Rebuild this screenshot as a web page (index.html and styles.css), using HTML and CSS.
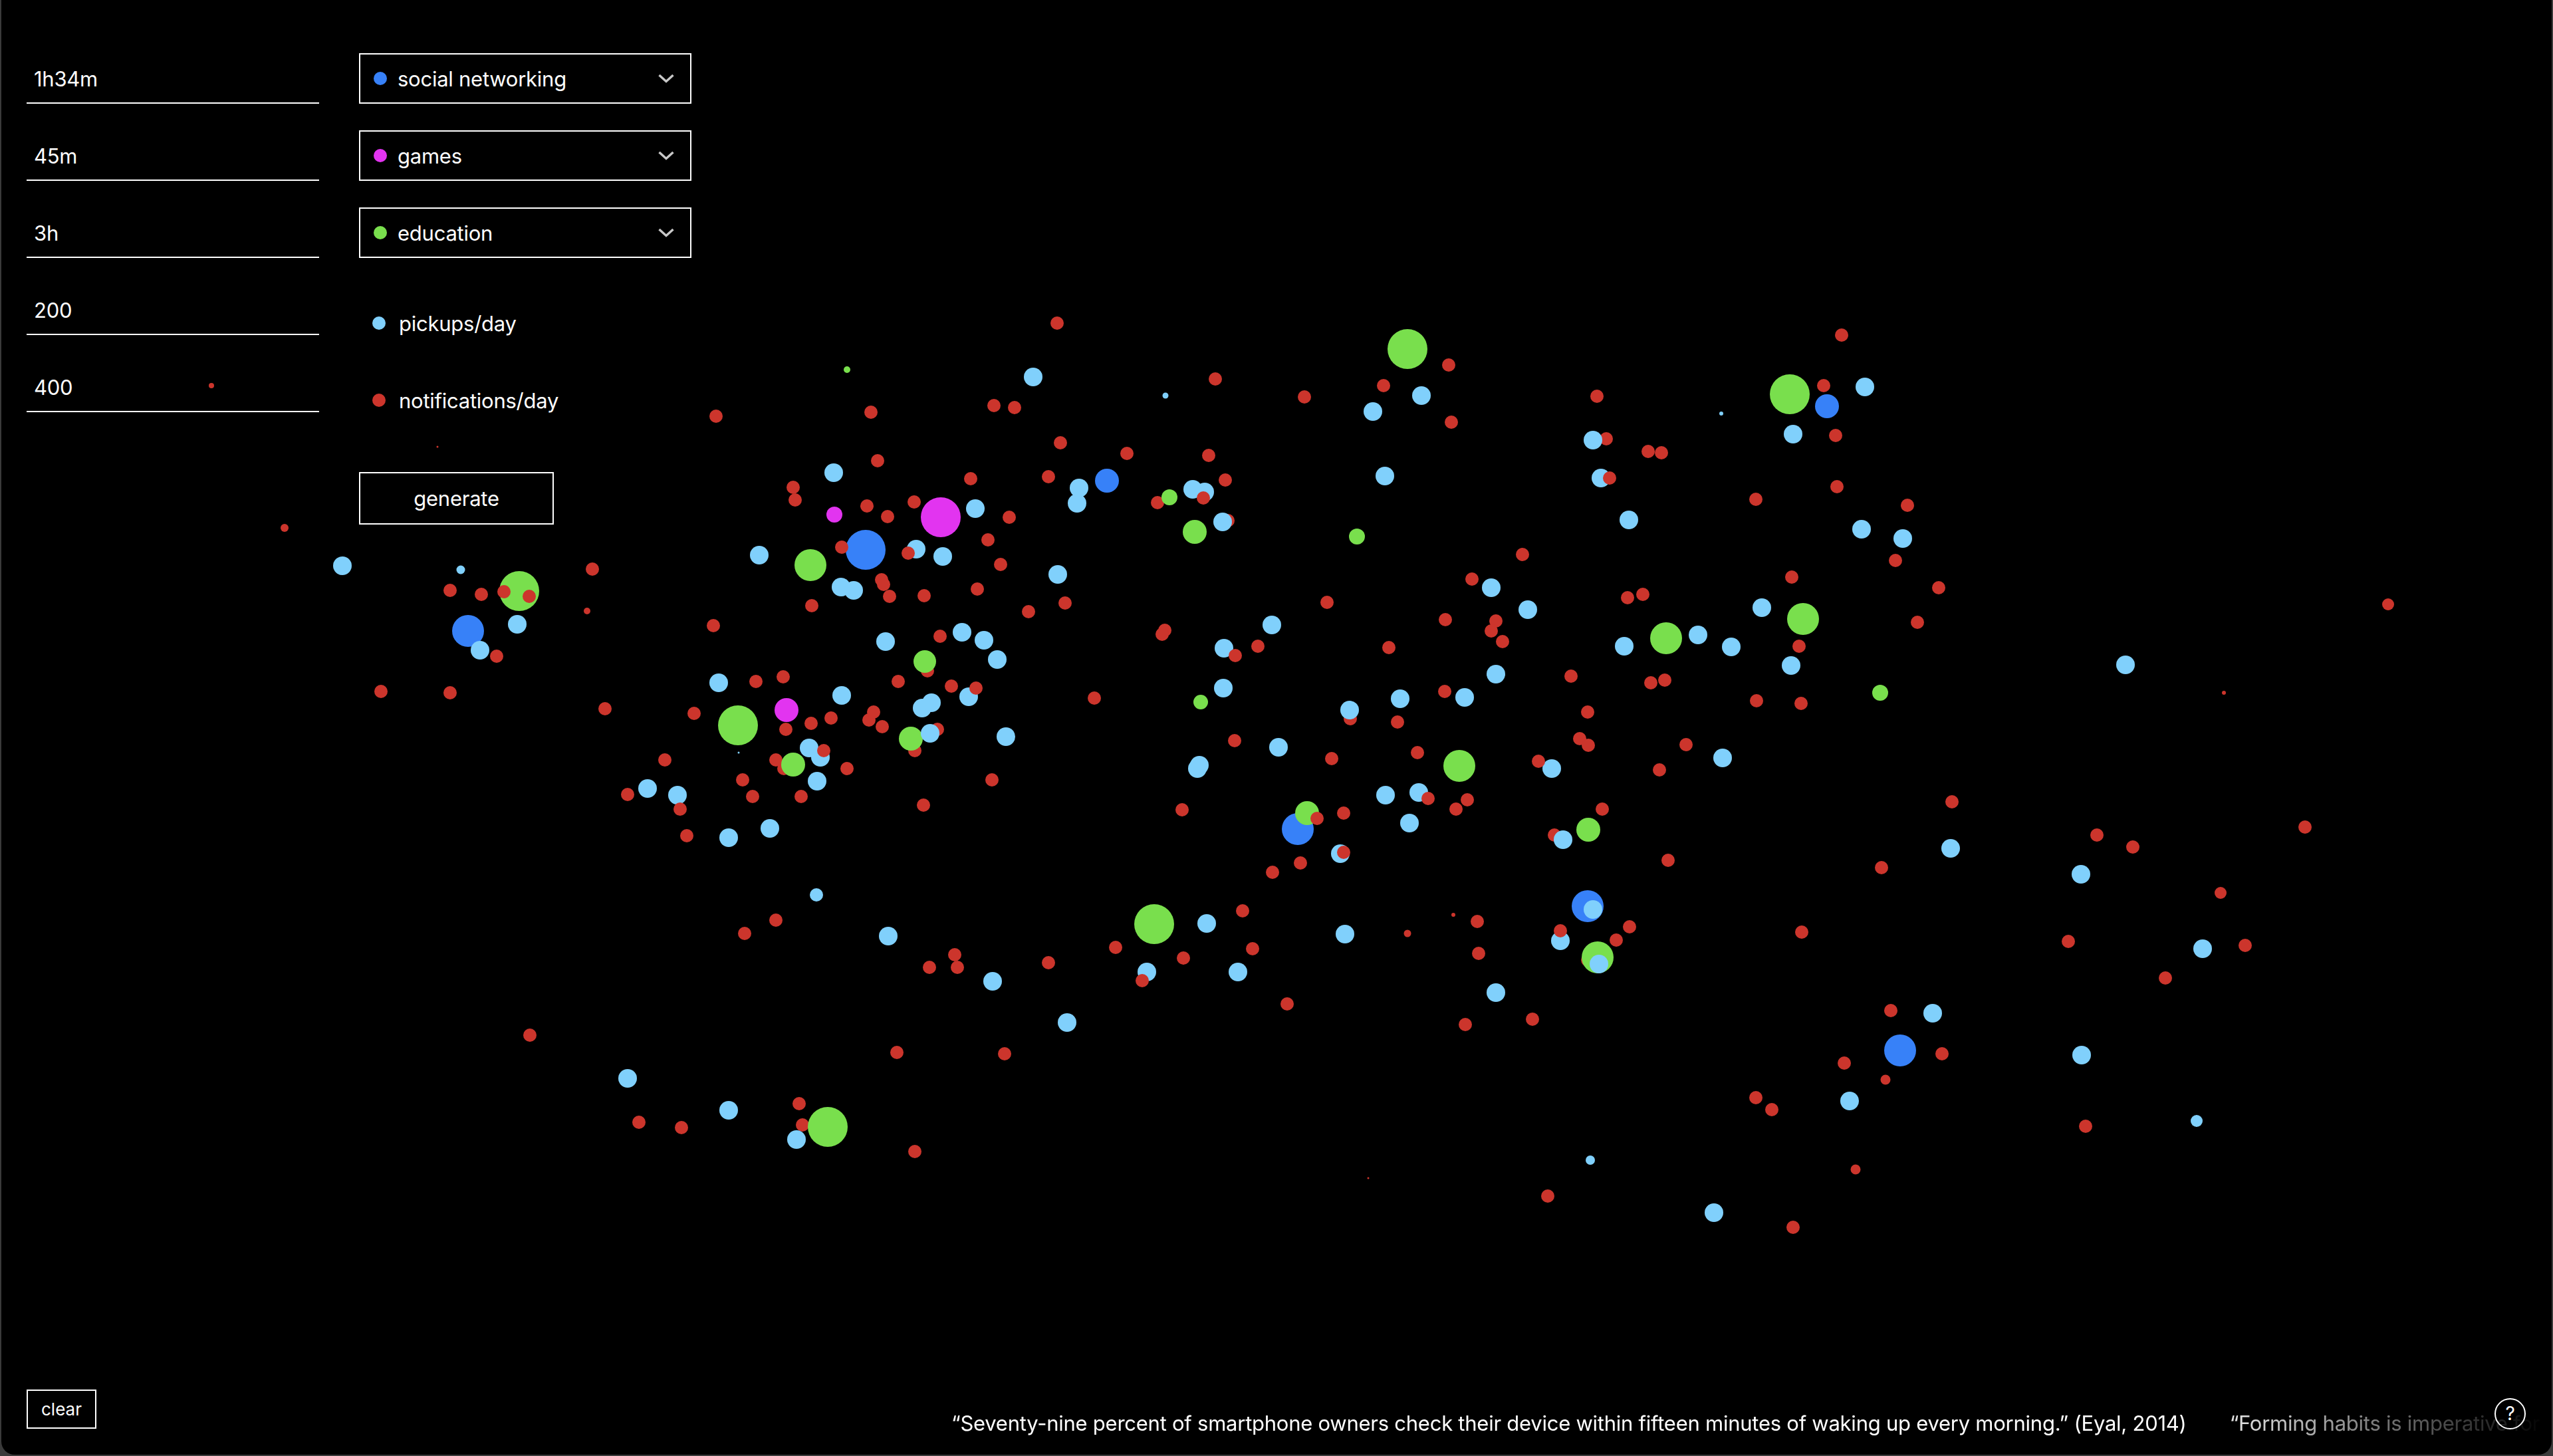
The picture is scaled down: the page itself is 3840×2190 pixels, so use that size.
FILE: index.html
```html
<!DOCTYPE html>
<html lang="en">
<head>
    <meta charset="UTF-8">
    <title>Phone usage</title>
    <link rel="stylesheet" href="styles.css">
</head>
<body>
    <div class="window">
        <svg class="canvas" viewBox="0 0 3840 2190" width="3840" height="2190">
            <g class="blue">
                <circle cx="704" cy="949" r="24"/><circle cx="1302" cy="827" r="30"/><circle cx="1665" cy="723" r="18"/>
                <circle cx="2748" cy="611" r="18"/><circle cx="1952" cy="1247" r="24"/><circle cx="2388" cy="1363" r="24"/>
                <circle cx="2858" cy="1580" r="24"/>
            </g>
            <g class="magenta">
                <circle cx="1255" cy="774" r="12"/><circle cx="1183" cy="1068" r="18"/><circle cx="1415" cy="778" r="30"/>
            </g>
            <!-- reds that sit under the green and pickup dots -->
            <g class="red">
                <circle cx="1395" cy="1009" r="10"/><circle cx="1376" cy="1129" r="10"/><circle cx="1179" cy="1156" r="10"/>
                <circle cx="1167" cy="1143" r="10"/><circle cx="2388" cy="1444" r="10"/><circle cx="1207" cy="1692" r="10"/>
                <circle cx="1741" cy="756" r="10"/><circle cx="1410" cy="1097" r="10"/><circle cx="2031" cy="1081" r="10"/>
                <circle cx="1847" cy="783" r="10"/><circle cx="2338" cy="1256" r="10"/><circle cx="2416" cy="660" r="10"/>
            </g>
            <g class="green">
                <circle cx="781" cy="889" r="30"/><circle cx="1219" cy="850" r="24"/><circle cx="1110" cy="1091" r="30"/>
                <circle cx="1193" cy="1150" r="18"/><circle cx="1274" cy="556" r="5"/><circle cx="2117" cy="525" r="30"/>
                <circle cx="1797" cy="800" r="18"/><circle cx="1759" cy="748" r="12"/><circle cx="2041" cy="807" r="12"/>
                <circle cx="1391" cy="995" r="17"/><circle cx="1370" cy="1111" r="18"/><circle cx="1806" cy="1056" r="11"/>
                <circle cx="2195" cy="1152" r="24"/><circle cx="1966" cy="1223" r="18"/><circle cx="2692" cy="593" r="30"/>
                <circle cx="2506" cy="960" r="24"/><circle cx="2712" cy="931" r="24"/><circle cx="2828" cy="1042" r="12"/>
                <circle cx="2389" cy="1248" r="18"/><circle cx="2403" cy="1440" r="24"/><circle cx="1736" cy="1390" r="30"/>
                <circle cx="1245" cy="1695" r="30"/>
            </g>
            <g class="pickup">
                <circle cx="515" cy="851" r="14"/><circle cx="693" cy="857" r="6.5"/><circle cx="778" cy="939" r="14"/>
                <circle cx="722" cy="978" r="14"/><circle cx="1254" cy="711" r="14"/><circle cx="1142" cy="835" r="14"/>
                <circle cx="1265" cy="883" r="14"/><circle cx="1284" cy="888" r="14"/><circle cx="1081" cy="1027" r="14"/>
                <circle cx="1266" cy="1046" r="14"/><circle cx="1217" cy="1125" r="14"/><circle cx="1234" cy="1139" r="14"/>
                <circle cx="1229" cy="1175" r="14"/><circle cx="974" cy="1186" r="14"/><circle cx="1019" cy="1196" r="14"/>
                <circle cx="1158" cy="1246" r="14"/><circle cx="1096" cy="1260" r="14"/><circle cx="1111" cy="1132" r="1.5"/>
                <circle cx="1554" cy="567" r="14"/><circle cx="1753" cy="595" r="4.5"/><circle cx="2138" cy="595" r="14"/>
                <circle cx="2065" cy="619" r="14"/><circle cx="1623" cy="734" r="14"/><circle cx="1620" cy="757" r="14"/>
                <circle cx="1812" cy="740" r="14"/><circle cx="1794" cy="736" r="14"/><circle cx="2083" cy="716" r="14"/>
                <circle cx="1467" cy="765" r="14"/><circle cx="1839" cy="785" r="14"/><circle cx="1378" cy="826" r="14"/>
                <circle cx="1418" cy="837" r="14"/><circle cx="1591" cy="864" r="14"/><circle cx="2243" cy="884" r="14"/>
                <circle cx="2298" cy="917" r="14"/><circle cx="1913" cy="940" r="14"/><circle cx="1447" cy="951" r="14"/>
                <circle cx="1480" cy="963" r="14"/><circle cx="1332" cy="965" r="14"/><circle cx="1500" cy="992" r="14"/>
                <circle cx="1841" cy="975" r="14"/><circle cx="1840" cy="1035" r="14"/><circle cx="2250" cy="1014" r="14"/>
                <circle cx="2106" cy="1051" r="14"/><circle cx="2203" cy="1049" r="14"/><circle cx="2030" cy="1068" r="14"/>
                <circle cx="1457" cy="1048" r="14"/><circle cx="1387" cy="1065" r="14"/><circle cx="1401" cy="1057" r="14"/>
                <circle cx="1399" cy="1103" r="14"/><circle cx="1513" cy="1108" r="14"/><circle cx="1923" cy="1124" r="14"/>
                <circle cx="1804" cy="1151" r="14"/><circle cx="1801" cy="1156" r="14"/><circle cx="2084" cy="1196" r="14"/>
                <circle cx="2134" cy="1192" r="14"/><circle cx="2120" cy="1238" r="14"/><circle cx="2805" cy="582" r="14"/>
                <circle cx="2589" cy="622" r="3"/><circle cx="2697" cy="653" r="14"/><circle cx="2396" cy="662" r="14"/>
                <circle cx="2408" cy="719" r="14"/><circle cx="2450" cy="782" r="14"/><circle cx="2800" cy="796" r="14"/>
                <circle cx="2862" cy="810" r="14"/><circle cx="2650" cy="914" r="14"/><circle cx="2554" cy="955" r="14"/>
                <circle cx="2443" cy="972" r="14"/><circle cx="2604" cy="973" r="14"/><circle cx="2694" cy="1001" r="14"/>
                <circle cx="3197" cy="1000" r="14"/><circle cx="2591" cy="1140" r="14"/><circle cx="2334" cy="1156" r="14"/>
                <circle cx="2351" cy="1263" r="14"/><circle cx="2016" cy="1284" r="14"/><circle cx="1815" cy="1389" r="14"/>
                <circle cx="2023" cy="1405" r="14"/><circle cx="2347" cy="1415" r="14"/><circle cx="1862" cy="1462" r="14"/>
                <circle cx="2250" cy="1493" r="14"/><circle cx="2405" cy="1450" r="14"/><circle cx="2396" cy="1368" r="14"/>
                <circle cx="2782" cy="1656" r="14"/><circle cx="2392" cy="1745" r="7"/><circle cx="2578" cy="1824" r="14"/>
                <circle cx="2907" cy="1524" r="14"/><circle cx="2934" cy="1276" r="14"/><circle cx="3130" cy="1315" r="14"/>
                <circle cx="3313" cy="1427" r="14"/><circle cx="3131" cy="1587" r="14"/><circle cx="3304" cy="1686" r="9"/>
                <circle cx="1228" cy="1346" r="10"/><circle cx="1336" cy="1408" r="14"/><circle cx="1493" cy="1476" r="14"/>
                <circle cx="1605" cy="1538" r="14"/><circle cx="1725" cy="1462" r="14"/><circle cx="944" cy="1622" r="14"/>
                <circle cx="1096" cy="1670" r="14"/><circle cx="1198" cy="1714" r="14"/>
            </g>
            <g class="red">
                <circle cx="318" cy="580" r="4"/><circle cx="658" cy="672" r="1.5"/><circle cx="1077" cy="626" r="10"/>
                <circle cx="428" cy="794" r="6"/><circle cx="891" cy="856" r="10"/><circle cx="677" cy="888" r="10"/>
                <circle cx="724" cy="894" r="10"/><circle cx="758" cy="890" r="10"/><circle cx="796" cy="897" r="10"/>
                <circle cx="883" cy="919" r="5"/><circle cx="747" cy="987" r="10"/><circle cx="573" cy="1040" r="10"/>
                <circle cx="677" cy="1042" r="10"/><circle cx="910" cy="1066" r="10"/><circle cx="1073" cy="941" r="10"/>
                <circle cx="1193" cy="733" r="10"/><circle cx="1196" cy="752" r="10"/><circle cx="1266" cy="823" r="10"/>
                <circle cx="1221" cy="911" r="10"/><circle cx="1137" cy="1025" r="10"/><circle cx="1178" cy="1018" r="10"/>
                <circle cx="1044" cy="1073" r="10"/><circle cx="1220" cy="1088" r="10"/><circle cx="1182" cy="1097" r="10"/>
                <circle cx="1250" cy="1080" r="10"/><circle cx="1239" cy="1129" r="10"/><circle cx="1274" cy="1156" r="10"/>
                <circle cx="1000" cy="1143" r="10"/><circle cx="1117" cy="1173" r="10"/><circle cx="1132" cy="1198" r="10"/>
                <circle cx="1205" cy="1198" r="10"/><circle cx="944" cy="1195" r="10"/><circle cx="1023" cy="1217" r="10"/>
                <circle cx="1033" cy="1257" r="10"/><circle cx="1304" cy="761" r="10"/><circle cx="1307" cy="1083" r="10"/>
                <circle cx="1314" cy="1071" r="10"/><circle cx="1590" cy="486" r="10"/><circle cx="1828" cy="570" r="10"/>
                <circle cx="1495" cy="610" r="10"/><circle cx="1526" cy="613" r="10"/><circle cx="1310" cy="620" r="10"/>
                <circle cx="1962" cy="597" r="10"/><circle cx="2179" cy="549" r="10"/><circle cx="2081" cy="580" r="10"/>
                <circle cx="2183" cy="635" r="10"/><circle cx="1595" cy="666" r="10"/><circle cx="1695" cy="682" r="10"/>
                <circle cx="1818" cy="685" r="10"/><circle cx="1320" cy="693" r="10"/><circle cx="1460" cy="720" r="10"/>
                <circle cx="1577" cy="717" r="10"/><circle cx="1843" cy="722" r="10"/><circle cx="1375" cy="755" r="10"/>
                <circle cx="1335" cy="777" r="10"/><circle cx="1518" cy="778" r="10"/><circle cx="1810" cy="749" r="10"/>
                <circle cx="1486" cy="812" r="10"/><circle cx="1366" cy="832" r="10"/><circle cx="1505" cy="849" r="10"/>
                <circle cx="1326" cy="872" r="10"/><circle cx="1329" cy="879" r="10"/><circle cx="1338" cy="897" r="10"/>
                <circle cx="1390" cy="896" r="10"/><circle cx="1470" cy="886" r="10"/><circle cx="1547" cy="920" r="10"/>
                <circle cx="1602" cy="907" r="10"/><circle cx="1996" cy="906" r="10"/><circle cx="2214" cy="871" r="10"/>
                <circle cx="2290" cy="834" r="10"/><circle cx="2174" cy="932" r="10"/><circle cx="2250" cy="934" r="10"/>
                <circle cx="2243" cy="949" r="10"/><circle cx="2260" cy="965" r="10"/><circle cx="2089" cy="974" r="10"/>
                <circle cx="1752" cy="948" r="10"/><circle cx="1748" cy="954" r="10"/><circle cx="1892" cy="972" r="10"/>
                <circle cx="1858" cy="986" r="10"/><circle cx="1414" cy="957" r="10"/><circle cx="1351" cy="1025" r="10"/>
                <circle cx="1431" cy="1032" r="10"/><circle cx="1468" cy="1035" r="10"/><circle cx="1646" cy="1050" r="10"/>
                <circle cx="1327" cy="1093" r="10"/><circle cx="2173" cy="1040" r="10"/><circle cx="2102" cy="1086" r="10"/>
                <circle cx="1857" cy="1114" r="10"/><circle cx="2003" cy="1141" r="10"/><circle cx="2132" cy="1132" r="10"/>
                <circle cx="2148" cy="1201" r="10"/><circle cx="2207" cy="1203" r="10"/><circle cx="2190" cy="1217" r="10"/>
                <circle cx="1981" cy="1231" r="10"/><circle cx="2021" cy="1223" r="10"/><circle cx="1778" cy="1218" r="10"/>
                <circle cx="1492" cy="1173" r="10"/><circle cx="1389" cy="1211" r="10"/><circle cx="2770" cy="504" r="10"/>
                <circle cx="2743" cy="580" r="10"/><circle cx="2402" cy="596" r="10"/><circle cx="2761" cy="655" r="10"/>
                <circle cx="2479" cy="679" r="10"/><circle cx="2499" cy="681" r="10"/><circle cx="2421" cy="719" r="10"/>
                <circle cx="2763" cy="732" r="10"/><circle cx="2641" cy="751" r="10"/><circle cx="2869" cy="760" r="10"/>
                <circle cx="2851" cy="843" r="10"/><circle cx="2695" cy="868" r="10"/><circle cx="2916" cy="884" r="10"/>
                <circle cx="2471" cy="894" r="10"/><circle cx="2448" cy="899" r="10"/><circle cx="2884" cy="936" r="10"/>
                <circle cx="2706" cy="972" r="10"/><circle cx="3592" cy="909" r="9"/><circle cx="2363" cy="1017" r="10"/>
                <circle cx="2504" cy="1023" r="10"/><circle cx="2483" cy="1027" r="10"/><circle cx="2642" cy="1054" r="10"/>
                <circle cx="2709" cy="1058" r="10"/><circle cx="3345" cy="1042" r="3"/><circle cx="2388" cy="1071" r="10"/>
                <circle cx="2376" cy="1111" r="10"/><circle cx="2389" cy="1121" r="10"/><circle cx="2536" cy="1120" r="10"/>
                <circle cx="2314" cy="1145" r="10"/><circle cx="2496" cy="1158" r="10"/><circle cx="2410" cy="1217" r="10"/>
                <circle cx="2936" cy="1206" r="10"/><circle cx="3467" cy="1244" r="10"/><circle cx="3154" cy="1256" r="10"/>
                <circle cx="3208" cy="1274" r="10"/><circle cx="2021" cy="1282" r="10"/><circle cx="1956" cy="1298" r="10"/>
                <circle cx="1914" cy="1312" r="10"/><circle cx="2509" cy="1294" r="10"/><circle cx="2830" cy="1305" r="10"/>
                <circle cx="3340" cy="1343" r="9"/><circle cx="1869" cy="1370" r="10"/><circle cx="2186" cy="1376" r="3"/>
                <circle cx="2222" cy="1386" r="10"/><circle cx="2117" cy="1404" r="5.5"/><circle cx="2347" cy="1400" r="10"/>
                <circle cx="2451" cy="1394" r="10"/><circle cx="2431" cy="1414" r="10"/><circle cx="1884" cy="1427" r="10"/>
                <circle cx="2224" cy="1434" r="10"/><circle cx="2710" cy="1402" r="10"/><circle cx="3111" cy="1416" r="10"/>
                <circle cx="3377" cy="1422" r="10"/><circle cx="3257" cy="1471" r="10"/><circle cx="1936" cy="1510" r="10"/>
                <circle cx="2844" cy="1520" r="10"/><circle cx="2305" cy="1533" r="10"/><circle cx="2204" cy="1541" r="10"/>
                <circle cx="2921" cy="1585" r="10"/><circle cx="2774" cy="1599" r="10"/><circle cx="2836" cy="1624" r="7.5"/>
                <circle cx="2641" cy="1651" r="10"/><circle cx="2665" cy="1669" r="10"/><circle cx="3137" cy="1694" r="10"/>
                <circle cx="2058" cy="1772" r="1.5"/><circle cx="2791" cy="1759" r="7.5"/><circle cx="2328" cy="1799" r="10"/>
                <circle cx="2697" cy="1846" r="10"/><circle cx="1167" cy="1384" r="10"/><circle cx="1120" cy="1404" r="10"/>
                <circle cx="1436" cy="1436" r="10"/><circle cx="1398" cy="1455" r="10"/><circle cx="1440" cy="1455" r="10"/>
                <circle cx="1577" cy="1448" r="10"/><circle cx="1678" cy="1425" r="10"/><circle cx="1780" cy="1441" r="10"/>
                <circle cx="1718" cy="1475" r="10"/><circle cx="797" cy="1557" r="10"/><circle cx="1349" cy="1583" r="10"/>
                <circle cx="1511" cy="1585" r="10"/><circle cx="1202" cy="1660" r="10"/><circle cx="961" cy="1688" r="10"/>
                <circle cx="1025" cy="1696" r="10"/><circle cx="1376" cy="1732" r="10"/>
            </g>
        </svg>

        <div class="panel">
            <div class="values">
                <div class="value">1h34m</div>
                <div class="value">45m</div>
                <div class="value">3h</div>
                <div class="value">200</div>
                <div class="value">400</div>
            </div>
            <div class="choices">
                <div class="select">
                    <span class="dot dot-blue"></span>
                    <span class="select-label">social networking</span>
                    <svg class="chevron" viewBox="0 0 24 14"><path d="M1.5 2l10.5 9.5L22.5 2"/></svg>
                </div>
                <div class="select">
                    <span class="dot dot-magenta"></span>
                    <span class="select-label">games</span>
                    <svg class="chevron" viewBox="0 0 24 14"><path d="M1.5 2l10.5 9.5L22.5 2"/></svg>
                </div>
                <div class="select">
                    <span class="dot dot-green"></span>
                    <span class="select-label">education</span>
                    <svg class="chevron" viewBox="0 0 24 14"><path d="M1.5 2l10.5 9.5L22.5 2"/></svg>
                </div>
                <div class="legend legend-first">
                    <span class="dot dot-pickup"></span>
                    <span>pickups/day</span>
                </div>
                <div class="legend">
                    <span class="dot dot-red"></span>
                    <span>notifications/day</span>
                </div>
                <button class="btn-generate">generate</button>
            </div>
        </div>

        <div class="footer">
            <button class="btn-clear">clear</button>
            <div class="ticker">
                <p class="quote">“Seventy-nine percent of smartphone owners check their device within fifteen minutes of waking up every morning.” (Eyal, 2014)</p>
                <p class="quote">“Forming habits is imperative for survival.”</p>
            </div>
            <div class="help">?</div>
        </div>
    </div>
</body>
</html>
```

FILE: styles.css
```css
* {
    box-sizing: border-box;
}

html, body {
    margin: 0;
    height: 100%;
    background: #3a3a3a;
}

body {
    font-family: Inter, "Noto Sans", sans-serif;
    font-size: 31px;
    letter-spacing: -0.25px;
    color: #fff;
    overflow: hidden;
}

.window {
    position: relative;
    display: flex;
    flex-direction: column;
    justify-content: space-between;
    width: 3836px;
    height: 2188px;
    margin-left: 2px;
    background: #000;
    border-radius: 0 0 20px 20px;
    overflow: hidden;
}

.canvas {
    position: absolute;
    top: 0;
    left: -2px;
}

.canvas .blue { fill: #3781f8; }
.canvas .magenta { fill: #e234f0; }
.canvas .green { fill: #79df4d; }
.canvas .pickup { fill: #80d0fc; }
.canvas .red { fill: #cc352c; }

.panel {
    position: relative;
    display: flex;
    gap: 60px;
    padding: 80px 0 0 38px;
}

.values {
    display: flex;
    flex-direction: column;
    gap: 40px;
    width: 440px;
}

.value {
    height: 76px;
    padding: 19px 11px 0;
    line-height: 40px;
    border-bottom: 2px solid #fff;
}

.choices {
    display: flex;
    flex-direction: column;
    gap: 40px;
    width: 500px;
}

.select {
    display: flex;
    align-items: center;
    height: 76px;
    padding: 0 24px 0 20px;
    border: 2px solid #fff;
}

.select-label {
    flex: 1;
    margin-left: 16px;
}

.chevron {
    width: 24px;
    height: 14px;
    fill: none;
    stroke: #c8c8c8;
    stroke-width: 3.5;
}

.dot {
    width: 20px;
    height: 20px;
    border-radius: 50%;
}

.dot-blue { background: #3781f8; }
.dot-magenta { background: #e234f0; }
.dot-green { background: #79df4d; }
.dot-pickup { background: #80d0fc; }
.dot-red { background: #cc352c; }

.legend {
    display: flex;
    align-items: center;
    gap: 20px;
    height: 76px;
    padding-left: 20px;
}

.legend-first {
    margin-top: 20px;
}

button {
    display: block;
    font: inherit;
    letter-spacing: inherit;
    color: #fff;
    background: #000;
    border: 2px solid #fff;
}

.btn-generate {
    width: 293px;
    height: 79px;
    margin-top: 30px;
}

.footer {
    position: relative;
    display: flex;
    height: 59px;
    margin-bottom: 39px;
    padding-left: 38px;
}

.btn-clear {
    width: 105px;
    height: 59px;
    font-size: 26px;
    letter-spacing: 0;
}

.ticker {
    display: flex;
    gap: 65px;
    align-self: flex-end;
    width: 2399px;
    margin: 0 0 -12px 1286px;
    line-height: 40px;
    overflow: hidden;
    white-space: nowrap;
    -webkit-mask-image: linear-gradient(to right, #000 78%, transparent);
    mask-image: linear-gradient(to right, #000 78%, transparent);
}

.quote {
    margin: 0;
}

.help {
    position: absolute;
    right: 39px;
    top: 13px;
    width: 47px;
    height: 47px;
    font-size: 28px;
    line-height: 43px;
    text-align: center;
    border: 2px solid #fff;
    border-radius: 50%;
}
```
